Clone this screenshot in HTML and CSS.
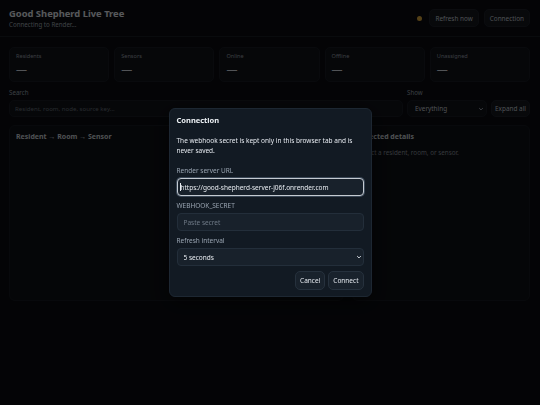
FILE: index.html
```html
<!DOCTYPE html>
<html lang="en">
<head>
  <meta charset="UTF-8" />
  <meta name="viewport" content="width=device-width, initial-scale=1.0" />
  <title>Good Shepherd Live Tree</title>
  <link rel="stylesheet" href="styles.css">
</head>
<body>

  <header>
    <div class="brand">
      <h1>Good Shepherd Live Tree</h1>
      <div class="status-text">Connecting to Render...</div>
    </div>
    <div class="header-actions">
      <span class="dot"></span>
      <button class="btn">Refresh now</button>
      <button class="btn">Connection</button>
    </div>
  </header>

  <main>
    <div class="stats">
      <div class="stat"><div class="stat-label">Residents</div><div class="stat-value">—</div></div>
      <div class="stat"><div class="stat-label">Sensors</div><div class="stat-value">—</div></div>
      <div class="stat"><div class="stat-label">Online</div><div class="stat-value">—</div></div>
      <div class="stat"><div class="stat-label">Offline</div><div class="stat-value">—</div></div>
      <div class="stat"><div class="stat-label">Unassigned</div><div class="stat-value">—</div></div>
    </div>

    <div class="controls">
      <div class="field">
        <label>Search</label>
        <input class="input" type="text" placeholder="Resident, room, node, source key..." />
      </div>
      <div class="field">
        <label>Show</label>
        <div class="select-wrap">
          <select class="input"><option>Everything</option></select>
          <svg class="chev" viewBox="0 0 10 10"><path d="M2 3.5 L5 6.5 L8 3.5" fill="none" stroke="currentColor" stroke-width="1.6"/></svg>
        </div>
      </div>
      <button class="btn expand">Expand all</button>
    </div>

    <div class="panels">
      <div class="panel">
        <h2>Resident → Room → Sensor</h2>
      </div>
      <div class="panel">
        <h2>Selected details</h2>
        <p class="muted">Select a resident, room, or sensor.</p>
      </div>
    </div>
  </main>

  <div class="overlay">
    <div class="modal">
      <h3>Connection</h3>
      <p class="note">The webhook secret is kept only in this browser tab and is never saved.</p>

      <div class="m-field">
        <label>Render server URL</label>
        <div class="caret-wrap">
          <input class="m-input focused" type="text" value="https://good-shepherd-server-j06f.onrender.com" />
          <span class="caret"></span>
        </div>
      </div>
      <div class="m-field">
        <label>WEBHOOK_SECRET</label>
        <input class="m-input" type="password" placeholder="Paste secret" />
      </div>
      <div class="m-field">
        <label>Refresh interval</label>
        <div class="select-wrap">
          <select class="m-input"><option>5 seconds</option></select>
          <svg class="chev light" viewBox="0 0 10 10"><path d="M2 3.5 L5 6.5 L8 3.5" fill="none" stroke="currentColor" stroke-width="1.6"/></svg>
        </div>
      </div>

      <div class="modal-buttons">
        <button class="m-btn">Cancel</button>
        <button class="m-btn">Connect</button>
      </div>
    </div>
  </div>

</body>
</html>
```

FILE: styles.css
```css
body {
  font-family: 'Noto Sans', 'Open Sans', sans-serif;
  background-color: #0b0d12;
  margin: 0;
  padding: 0;
  color: #e4e8ee;
  font-size: 7px;
}
header {
  display: flex;
  justify-content: space-between;
  align-items: center;
  height: 36px;
  padding: 0 10px 0 9px;
  border-bottom: 1px solid #1a1d24;
}
h1 {
  margin: 0;
  font-size: 9.4px;
  line-height: 13px;
  font-weight: bold;
}
.status-text {
  color: #a3abb6;
  font-size: 6.2px;
  line-height: 10px;
  margin-top: 0;
}
.header-actions {
  display: flex;
  align-items: center;
  gap: 5px;
}
.dot {
  width: 5px;
  height: 5px;
  border-radius: 50%;
  background-color: #e0aa3e;
  margin-right: 2px;
}
.btn {
  font-family: inherit;
  font-size: 6.4px;
  color: #c9d0d8;
  background-color: #15181f;
  border: 1px solid #1d2129;
  border-radius: 5px;
  height: 18px;
  padding: 0 5px;
}
main {
  padding: 10px 10px 0 9px;
}
.stats {
  display: grid;
  grid-template-columns: repeat(5, 1fr);
  gap: 5px;
}
.stat {
  background-color: #111319;
  border: 1px solid #191c23;
  border-radius: 5px;
  height: 33px;
  padding: 0 6px;
}
.stat-label {
  color: #9aa2ad;
  font-size: 5.6px;
  margin-top: 4px;
  line-height: 8px;
}
.stat-value {
  font-size: 11px;
  line-height: 14px;
  margin-top: 2px;
  color: #d8dde4;
}
.controls {
  display: grid;
  grid-template-columns: 1fr 80px 39px;
  gap: 4px;
  align-items: end;
  margin-top: 6px;
}
.field label {
  display: block;
  color: #9aa2ad;
  font-size: 6.2px;
  line-height: 10px;
  margin-bottom: 2px;
}
.input {
  box-sizing: border-box;
  width: 100%;
  height: 17px;
  font-family: inherit;
  font-size: 6.1px;
  color: #c9d0d8;
  background-color: #111319;
  border: 1px solid #191c23;
  border-radius: 5px;
  padding: 0 5px;
  -webkit-appearance: none;
  appearance: none;
}
.select-wrap .input {
  padding: 0 7px;
  font-size: 6.4px;
}
.input::placeholder {
  color: #6b737e;
}
.expand {
  height: 17px;
  width: 39px;
  padding: 0;
}
.select-wrap,
.caret-wrap {
  position: relative;
}
.chev {
  position: absolute;
  right: 3px;
  top: 50%;
  width: 6px;
  height: 6px;
  margin-top: -3px;
  color: #aab2bc;
}
.chev.light {
  color: #e4e8ee;
  right: 2px;
}
.panels {
  display: grid;
  grid-template-columns: 1fr 178px;
  gap: 8px;
  margin-top: 8px;
}
.panel {
  background-color: #0e1015;
  border: 1px solid #171a21;
  border-radius: 6px;
  height: 174px;
  padding: 0 6px;
}
.panel h2 {
  font-size: 7px;
  line-height: 10px;
  margin: 6px 0 0;
  color: #cfd5dc;
}
.muted {
  color: #8c949e;
  margin: 6px 0 0;
  font-size: 6.3px;
}
.overlay {
  position: fixed;
  inset: 0;
  background-color: rgba(0, 0, 0, 0.62);
  display: flex;
  align-items: center;
  justify-content: center;
}
.modal {
  box-sizing: border-box;
  width: 203px;
  background-color: #121a23;
  border: 1px solid #1d2732;
  border-radius: 6px;
  padding: 6px 7px 6px;
  box-shadow: 0 6px 20px rgba(0,0,0,0.5);
}
.modal h3 {
  margin: 0;
  font-size: 7.5px;
  line-height: 11px;
  font-weight: bold;
  color: #eef2f6;
}
.note {
  margin: 10px 0 10px;
  font-size: 6.5px;
  line-height: 10px;
  color: #e4e8ee;
}
.m-field {
  margin-bottom: 5px;
}
.m-field label {
  display: block;
  font-size: 6.5px;
  line-height: 10px;
  color: #98a3b0;
  margin-bottom: 2px;
}
.m-input {
  box-sizing: border-box;
  width: 100%;
  height: 18px;
  font-family: inherit;
  font-size: 6.5px;
  color: #e8ecf1;
  background-color: #18212b;
  border: 1px solid #232e3a;
  border-radius: 4px;
  padding: 0 6px;
  outline: none;
  -webkit-appearance: none;
  appearance: none;
}
.m-input::placeholder {
  color: #6f7a87;
}
.m-input.focused {
  border: 1px solid #c4cad1;
  box-shadow: 0 0 0 1px #3a4756;
  padding-left: 3px;
}
.caret {
  position: absolute;
  left: 3px;
  top: 5px;
  width: 1px;
  height: 8px;
  background-color: #e8ecf1;
}
.modal-buttons {
  display: flex;
  justify-content: flex-end;
  gap: 3px;
  margin-top: 5px;
}
.m-btn {
  font-family: inherit;
  font-size: 6.5px;
  color: #e4e8ee;
  background-color: #19222c;
  border: 1px solid #26313d;
  border-radius: 5px;
  height: 19px;
  padding: 0 4px;
}
```
